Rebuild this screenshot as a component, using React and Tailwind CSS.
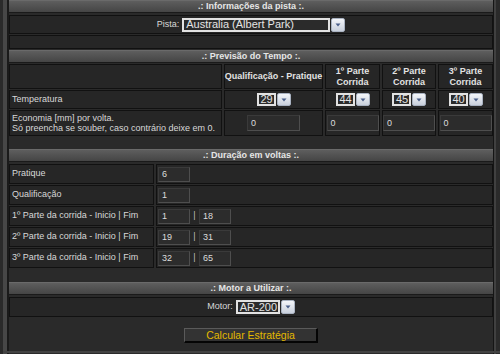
import React from "react";

const F = { fontFamily: '"Liberation Sans", Arial, sans-serif' };

function Header({ children, className = "" }) {
  return (
    <div
      className={`h-[13px] flex items-center justify-center bg-gradient-to-b from-[#5e5e5e] to-[#454545] border-t border-[#6a6a6a] border-b border-b-[#1a1a1a] text-[9px] font-bold text-[#e6e6e6] leading-none ${className}`}
    >
      {children}
    </div>
  );
}

function Cell({ children, className = "" }) {
  return (
    <div className={`bg-[#262626] border border-[#111111] ${className}`}>{children}</div>
  );
}

function Arrow({ h }) {
  return (
    <span
      className={`w-[14px] ${h} ml-[1px] flex items-center justify-center bg-gradient-to-b from-[#f4f6fa] to-[#c9d0dc] border border-[#aab3c2] rounded-[2px]`}
    >
      <svg width="6" height="4" viewBox="0 0 6 4">
        <path d="M0.5 0.5 L5.5 0.5 L3 3.5 Z" fill="#4a5f8a" />
      </svg>
    </span>
  );
}

function Select({ value, w, h = "h-[14px]", text = "text-[11px]" }) {
  return (
    <span className="inline-flex items-center">
      <span
        className={`${w} ${h} flex items-center border-2 border-[#e2e2e2] bg-[#2b2b2b] text-[#e4e4e4] ${text} leading-none pl-[2px] overflow-hidden whitespace-nowrap`}
      >
        {value}
      </span>
      <Arrow h={h} />
    </span>
  );
}

function Input({ value, w = "w-[32px]", h = "h-[15px]" }) {
  return (
    <span
      className={`${w} ${h} flex items-center bg-[#2c2c2c] border border-[#4e4e4e] border-t-[#3a3a3a] border-l-[#3a3a3a] text-[9px] text-[#dcdcdc] leading-none pl-[3px]`}
    >
      {value}
    </span>
  );
}

function LapRow({ label, a, b }) {
  return (
    <div className="flex gap-[2px] h-[20px] mt-[1px]">
      <Cell className="w-[145px] flex items-center pl-[2px] text-[9px] text-[#d8d8d8]">{label}</Cell>
      <Cell className="flex-1 flex items-center pl-[1px]">
        <Input value={a} />
        {b !== undefined && (
          <>
            <span className="w-[9px] text-center text-[9px] text-[#bdbdbd]">|</span>
            <Input value={b} />
          </>
        )}
      </Cell>
    </div>
  );
}

export default function App() {
  return (
    <div className="w-[500px] h-[354px] bg-[#2a2a2a] flex overflow-hidden relative" style={F}>
      <div className="w-[3px]" />
      <div className="w-[4px] bg-[#474747]" />
      <div className="w-[2px] bg-[#1a1a1a]" />
      <div className="w-[484px] flex flex-col">
        <Header>.: Informações da pista :.</Header>
        <Cell className="mt-[2px] h-[19px] flex items-center justify-center gap-[3px]">
          <span className="text-[9px] text-[#d8d8d8]">Pista:</span>
          <Select value="Australia (Albert Park)" w="w-[148px]" />
        </Cell>
        <Cell className="mt-[1px] h-[14px]" />
        <Header className="mt-[1px]">.: Previsão do Tempo :.</Header>

        <div className="mt-[1px] flex gap-[2px] h-[25px]">
          <Cell className="w-[213px]" />
          <Cell className="w-[99px] flex items-center justify-center text-[9px] font-bold text-[#e2e2e2] whitespace-nowrap">
            Qualificação - Pratique
          </Cell>
          {["1º", "2º", "3º"].map((p, i) => (
            <Cell
              key={p}
              className={`${i === 1 ? "w-[54px]" : "w-[55px]"} flex flex-col items-center justify-center text-[9px] font-bold text-[#e2e2e2] leading-[11px]`}
            >
              <span>{p} Parte</span>
              <span>Corrida</span>
            </Cell>
          ))}
        </div>

        <div className="mt-[1px] flex gap-[2px] h-[19px]">
          <Cell className="w-[213px] flex items-center pl-[2px] text-[9px] text-[#d8d8d8]">Temperatura</Cell>
          <Cell className="w-[99px] flex items-center justify-center">
            <Select value="29" w="w-[19px]" h="h-[13px]" />
          </Cell>
          <Cell className="w-[55px] flex items-center justify-center">
            <Select value="44" w="w-[19px]" h="h-[13px]" />
          </Cell>
          <Cell className="w-[54px] flex items-center justify-center">
            <Select value="45" w="w-[19px]" h="h-[13px]" />
          </Cell>
          <Cell className="w-[55px] flex items-center justify-center">
            <Select value="40" w="w-[19px]" h="h-[13px]" />
          </Cell>
        </div>

        <div className="mt-[1px] flex gap-[2px] h-[26px]">
          <Cell className="w-[213px] flex flex-col justify-center pl-[2px] text-[9px] text-[#d8d8d8] leading-[10px] whitespace-nowrap">
            <span>Economia [mm] por volta.</span>
            <span>Só preencha se souber, caso contrário deixe em 0.</span>
          </Cell>
          <Cell className="w-[99px] flex items-center justify-center">
            <Input value="0" w="w-[53px]" h="h-[16px]" />
          </Cell>
          <Cell className="w-[55px] flex items-center justify-center">
            <Input value="0" w="w-[52px]" h="h-[16px]" />
          </Cell>
          <Cell className="w-[54px] flex items-center justify-center">
            <Input value="0" w="w-[52px]" h="h-[16px]" />
          </Cell>
          <Cell className="w-[55px] flex items-center justify-center">
            <Input value="0" w="w-[52px]" h="h-[16px]" />
          </Cell>
        </div>

        <Header className="mt-[13px]">.: Duração em voltas :.</Header>
        <div className="mt-[1px]" />
        <LapRow label="Pratique" a="6" />
        <LapRow label="Qualificação" a="1" />
        <LapRow label="1º Parte da corrida - Inicio | Fim" a="1" b="18" />
        <LapRow label="2º Parte da corrida - Inicio | Fim" a="19" b="31" />
        <LapRow label="3º Parte da corrida - Inicio | Fim" a="32" b="65" />

        <Header className="mt-[14px]">.: Motor a Utilizar :.</Header>
        <Cell className="mt-[2px] h-[20px] flex items-center justify-center gap-[3px]">
          <span className="text-[9px] text-[#d8d8d8]">Motor:</span>
          <Select value="AR-200" w="w-[44px]" />
        </Cell>

        <div className="mt-[11px] flex justify-center">
          <button className="w-[134px] h-[15px] flex items-center justify-center bg-[#333333] border-t border-l border-[#5a5a5a] border-r-2 border-b-2 border-r-[#050505] border-b-[#050505] text-[10.5px] text-[#e3b900] leading-none">
            Calcular Estratégia
          </button>
        </div>
      </div>
      <div className="w-[1px] bg-[#151515]" />
      <div className="w-[2px] bg-[#404040]" />
      <div className="flex-1" />
      <div className="absolute left-[3px] right-0 bottom-[1px] h-[2px] bg-[#424242]" />
    </div>
  );
}
